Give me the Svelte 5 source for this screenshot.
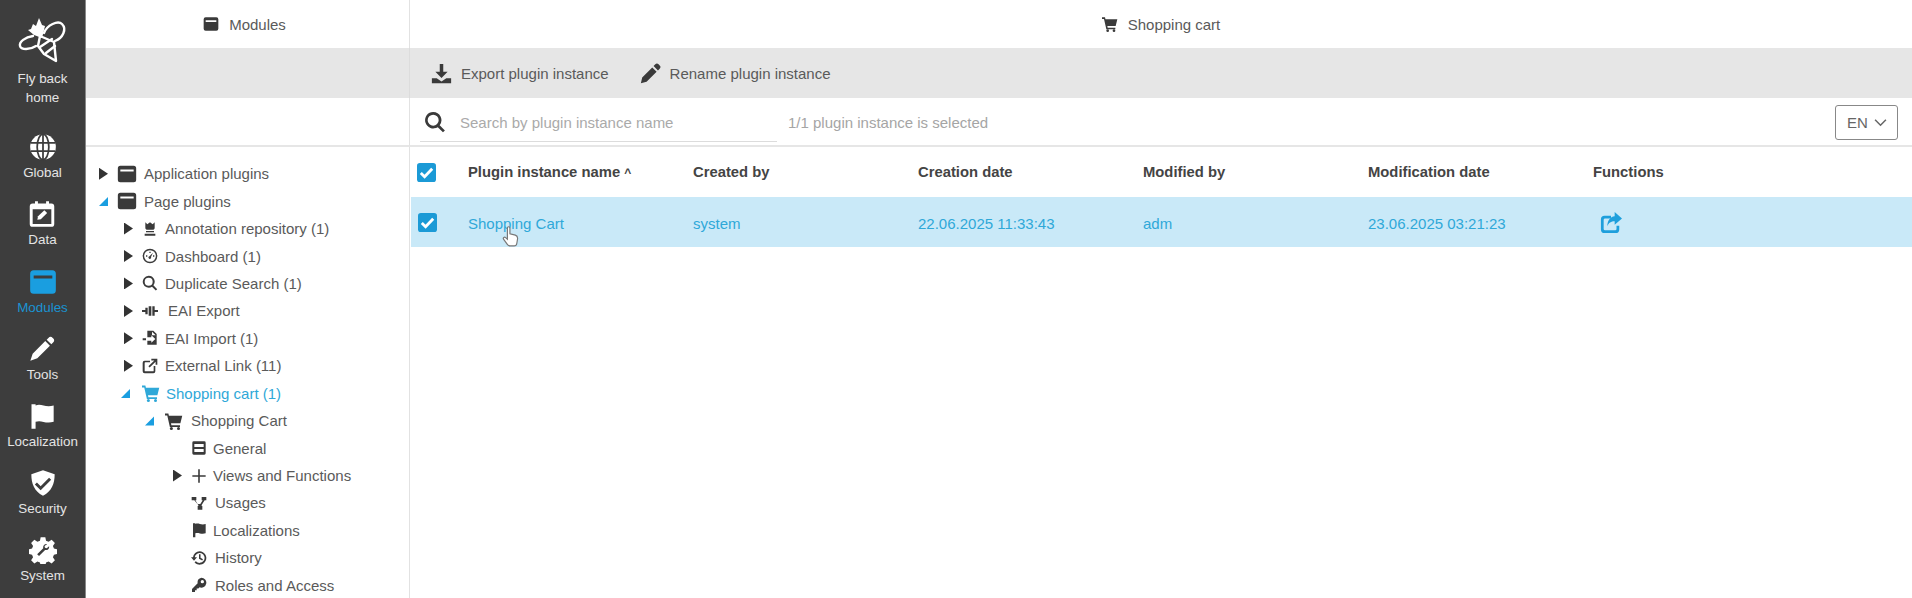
<script lang="ts">
	const nav = [
		{ id: 'global', label: 'Global' },
		{ id: 'data', label: 'Data' },
		{ id: 'modules', label: 'Modules', active: true },
		{ id: 'tools', label: 'Tools' },
		{ id: 'flag', label: 'Localization' },
		{ id: 'security', label: 'Security' },
		{ id: 'system', label: 'System' }
	];

	// level sets the indent, caret is closed / open / none
	const tree = [
		{ level: 0, caret: 'closed', icon: 'modules', label: 'Application plugins' },
		{ level: 0, caret: 'open', icon: 'modules', label: 'Page plugins' },
		{ level: 1, caret: 'closed', icon: 'crown', label: 'Annotation repository (1)' },
		{ level: 1, caret: 'closed', icon: 'gauge', label: 'Dashboard (1)' },
		{ level: 1, caret: 'closed', icon: 'search', label: 'Duplicate Search (1)' },
		{ level: 1, caret: 'closed', icon: 'export', label: 'EAI Export', wide: true },
		{ level: 1, caret: 'closed', icon: 'import', label: 'EAI Import (1)' },
		{ level: 1, caret: 'closed', icon: 'link', label: 'External Link (11)' },
		{ level: 1, caret: 'open', icon: 'cart', label: 'Shopping cart (1)', active: true },
		{ level: 2, caret: 'open', icon: 'cart', label: 'Shopping Cart' },
		{ level: 3, caret: 'none', icon: 'general', label: 'General' },
		{ level: 3, caret: 'closed', icon: 'plus', label: 'Views and Functions' },
		{ level: 3, caret: 'none', icon: 'usages', label: 'Usages', wide: true },
		{ level: 3, caret: 'none', icon: 'flag', label: 'Localizations' },
		{ level: 3, caret: 'none', icon: 'history', label: 'History', wide: true },
		{ level: 3, caret: 'none', icon: 'key', label: 'Roles and Access', wide: true }
	];

	const columns = ['Created by', 'Creation date', 'Modified by', 'Modification date'];
	const row = ['system', '22.06.2025 11:33:43', 'adm', '23.06.2025 03:21:23'];
</script>

{#snippet icon(name: string)}
	<svg class="icon" viewBox="0 0 24 24" aria-hidden="true">
		{#if name === 'modules'}
			<path fill-rule="evenodd" d="M4 2h16a3 3 0 0 1 3 3v14a3 3 0 0 1-3 3H4a3 3 0 0 1-3-3V5a3 3 0 0 1 3-3zM4 6.500v2.500h16V6.500z" />
		{:else if name === 'global'}
			<circle cx="12" cy="12" r="11" />
			<g fill="none" stroke="#3d3d3d" stroke-width="1.500">
				<ellipse cx="12" cy="12" rx="5" ry="11" />
				<path d="M12 1v22M1.500 8.500h21M1.500 15.500h21" />
			</g>
		{:else if name === 'data'}
			<path fill-rule="evenodd" d="M6 1h2.500v2h7V1H18v2h2a2.500 2.500 0 0 1 2.500 2.500v15A2.500 2.500 0 0 1 20 23H4a2.500 2.500 0 0 1-2.500-2.500v-15A2.500 2.500 0 0 1 4 3h2zM4 8v12.500h16V8z" />
			<path d="M8 17l.6-3 5.400-5.200 2.400 2.400-5.400 5.200z" />
		{:else if name === 'tools'}
			<path d="M17.500 2.500a2.600 2.600 0 0 1 3.700 0l.3.300a2.600 2.600 0 0 1 0 3.700L20 8l-4-4zM14.800 5.200l4 4L8 20l-6 2 2-6z" />
		{:else if name === 'flag'}
			<path d="M3 2h3.500v1c5-2 8 2 15.500 0v14c-7.500 2-10.500-2-15.500 0v6H3z" />
		{:else if name === 'security'}
			<path fill-rule="evenodd" d="M12 1l10 3.500c0 8-2.500 14.500-10 18.500C4.500 19 2 12.500 2 4.500zM6.800 11.500l-1.800 1.800 5 5 9-9-1.800-1.800-7.200 7.200z" />
		{:else if name === 'system'}
			<path fill-rule="evenodd" d="M10 1h4l.6 3 2.200.9 2.600-1.700 2.800 2.800-1.700 2.600.9 2.200 3 .6v4l-3 .6-.9 2.200 1.700 2.600-2.800 2.800-2.600-1.700-2.200.9-.6 3h-4l-.6-3-2.200-.9-2.600 1.700-2.800-2.800 1.700-2.600-.9-2.200-3-.6v-4l3-.6.9-2.200-1.700-2.600 2.800-2.800 2.600 1.700 2.200-.9zM15.500 7c-2-.5-3.800 1.200-3.300 3.400L7 15.600 8.600 17.200l5.200-5.200c2.200.5 3.900-1.300 3.400-3.300l-2 1.800-1.500-.4-.4-1.500z" />
		{:else if name === 'crown'}
			<path d="M5 2l3 3 4-3 4 3 3-3v8c0 2-1.500 3-3 3H8c-1.500 0-3-1-3-3zM6 15h12v2H6zM4 19h16v3H4z" />
		{:else if name === 'gauge'}
			<path fill-rule="evenodd" d="M12 1a11 11 0 1 1 0 22 11 11 0 0 1 0-22zm0 2.200a8.800 8.800 0 1 0 0 17.600 8.800 8.800 0 0 0 0-17.600z" />
			<path d="M16.500 7l-3 6.500a2 2 0 1 1-2.300-1.200zM6 11h2v2H6zM11 5.500h2v2h-2zM16.500 11h2v2h-2z" />
		{:else if name === 'search'}
			<path fill-rule="evenodd" d="M10 1a9 9 0 0 1 7.100 14.500l5.700 5.700-2.100 2.100-5.700-5.700A9 9 0 1 1 10 1zm0 3a6 6 0 1 0 0 12 6 6 0 0 0 0-12z" />
		{:else if name === 'export'}
			<path d="M0 10.500h5V7h3.500v10H5v-3.500H0zM10 5h4v14h-4zM15.500 5H19v5.500h5v3h-5V19h-3.500z" />
		{:else if name === 'import'}
			<path fill-rule="evenodd" d="M8 1h9l5 5v16H8v-6h6v3l6-5.500-6-5.500v3H8zM15 2.500V8h5.500zM1 12.500h5v3H1z" />
		{:else if name === 'link'}
			<path d="M4 4h8v2.500H5a1 1 0 0 0-1 1V19a1 1 0 0 0 1 1h11.500a1 1 0 0 0 1-1v-7H20v8a3 3 0 0 1-3 3H4a3 3 0 0 1-3-3V7a3 3 0 0 1 3-3zM14 1h9v9h-2.600V5.500L11.500 14.400 9.600 12.500 18.500 3.600H14z" />
		{:else if name === 'cart'}
			<path d="M0 2h4.500l.7 3H23l-2.500 10H8l.5 2.500H20V20H6.500L3 4.500H0z" />
			<circle cx="8.500" cy="22" r="2" />
			<circle cx="18" cy="22" r="2" />
		{:else if name === 'general'}
			<path fill-rule="evenodd" d="M4 2h16a2 2 0 0 1 2 2v16a2 2 0 0 1-2 2H4a2 2 0 0 1-2-2V4a2 2 0 0 1 2-2zM5 6v4.500h14V6zM5 13.500V18h14v-4.500z" />
		{:else if name === 'plus'}
			<path d="M10.800 2h2.400v8.800H22v2.400h-8.800V22h-2.400v-8.800H2v-2.400h8.800z" />
		{:else if name === 'usages'}
			<path d="M1 3h7v5H6.500L10 13.500h4L17.500 8H16V3h7v5h-2.500L16 15v1.500h1V22h-7v-5.500h1V15L5 8H1z" />
		{:else if name === 'history'}
			<path d="M13 2a10 10 0 1 1-7.700 16.400l2-1.700A7.400 7.400 0 1 0 5.600 11H9l-4.500 5L0 11h3A10 10 0 0 1 13 2zM12 6.500h2.300v5.200l3.700 2.200-1.200 2-4.800-2.900z" />
		{:else if name === 'key'}
			<path fill-rule="evenodd" d="M15.500 1a7.500 7.500 0 1 1-2.700 14.500L11 17.300H8.500v2.500H6V22.500H1.500V18l8.500-8.500A7.500 7.500 0 0 1 15.500 1zm1.500 3.500a2.500 2.500 0 1 0 0 5 2.500 2.500 0 0 0 0-5z" />
		{/if}
	</svg>
{/snippet}

{#snippet check()}
	<svg class="check" viewBox="0 0 20 20" aria-hidden="true">
		<rect x="0" y="0" width="20" height="20" rx="3" fill="#1b9ad6" />
		<path d="M4 10.500l4 4 8-8.500" fill="none" stroke="#fff" stroke-width="3" />
	</svg>
{/snippet}

<div class="app">
	<nav class="rail">
		<a class="home" href="#home">
			<svg class="bee" viewBox="17 16 52 48" aria-hidden="true">
				<path d="M28 30l3-1 2-5 3 2 3-8 3 7 3 1-3 12-8-3z" fill="#fff" />
				<g fill="none" stroke="#fff" stroke-width="2.400" stroke-linejoin="round" stroke-linecap="round">
					<path d="M44 33c3-8 14-13 18-9 5 5 1 14-7 17" />
					<path d="M33 36c-8 1-14 6-13 10 1 4 10 4 16 0" />
					<path d="M40 36l14 6 2 19-12-7-6-8z" />
					<path d="M40 47l12-8M46 53l9-7" />
				</g>
			</svg>
			<span>Fly back<br />home</span>
		</a>
		{#each nav as item}
			<a class="item" class:active={item.active} href="#{item.id}">
				{@render icon(item.id)}
				<span>{item.label}</span>
			</a>
		{/each}
	</nav>

	<div class="shell">
		<div class="title title-left">
			{@render icon('modules')}
			<span>Modules</span>
		</div>
		<div class="title">
			{@render icon('cart')}
			<span>Shopping cart</span>
		</div>

		<div class="band band-left"></div>
		<div class="band toolbar">
			<button type="button">
				<svg class="icon tool-icon" viewBox="0 0 24 24" aria-hidden="true">
					<path d="M10 1h4v9h5l-7 7-7-7h5zM1 17.500h5.500L12 21l5.500-3.500H23V23H1z" />
				</svg>
				Export plugin instance
			</button>
			<button type="button">
				<svg class="icon tool-icon" viewBox="0 0 24 24" aria-hidden="true">
					<path d="M17.500 1.500a2.600 2.600 0 0 1 3.700 0l1.300 1.300a2.600 2.600 0 0 1 0 3.700L20.500 8.500l-5-5zM14 5l5 5L7.500 21.500 1 23l1.500-6.500z" />
				</svg>
				Rename plugin instance
			</button>
		</div>

		<div class="side-top"></div>
		<div class="filter">
			<div class="search">
				{@render icon('search')}
				<span>Search by plugin instance name</span>
			</div>
			<span class="count">1/1 plugin instance is selected</span>
			<button class="lang" type="button">
				EN
				<svg viewBox="0 0 12 8" aria-hidden="true">
					<path d="M1 1.500l5 5 5-5" fill="none" stroke="#666" stroke-width="1.400" />
				</svg>
			</button>
		</div>

		<ul class="tree">
			{#each tree as node}
				<li class="node level-{node.level}" class:active={node.active} class:wide={node.wide}>
					<span class="caret {node.caret}"></span>
					{@render icon(node.icon)}
					<span>{node.label}</span>
				</li>
			{/each}
		</ul>

		<div class="table">
			<div class="head">
				<span class="box">{@render check()}</span>
				<span class="cell">Plugin instance name <small>^</small></span>
				{#each columns as col}
					<span class="cell">{col}</span>
				{/each}
				<span class="cell">Functions</span>
			</div>
			<div class="rowline">
				<span class="box">{@render check()}</span>
				<span class="cell name">
					Shopping Cart
					<svg class="hand" viewBox="0 0 20 24" aria-hidden="true">
						<path d="M6 2.500c0-1.800 2.800-1.800 2.800 0V9l6 1.500c2 .6 2.700 2 2.500 4l-.8 5c-.3 1.800-1.500 3-3 3H9c-1.500 0-2.500-.8-3.300-2L1.700 15c-1-1.600 1-3 2.300-1.800L6 15z" fill="#fff" stroke="#777" stroke-width="1.300" />
					</svg>
				</span>
				{#each row as value}
					<span class="cell">{value}</span>
				{/each}
				<span class="cell fn">
					<svg viewBox="0 0 24 24" aria-hidden="true">
						<path d="M5 4h7v3H5.500A1.500 1.500 0 0 0 4 8.500v10A1.500 1.500 0 0 0 5.500 20h11a1.500 1.500 0 0 0 1.500-1.500V15h3v4a4 4 0 0 1-4 4H5a4 4 0 0 1-4-4V8a4 4 0 0 1 4-4z" fill="#1e9fdc" />
						<path d="M16 0l8 7-8 7V10c-4 0-6.500 1.500-8 5.500C8 9.500 11 5 16 4.500z" fill="#1e9fdc" />
					</svg>
				</span>
			</div>
		</div>
	</div>
</div>

<style>
	:global(body) {
		background: #fff;
		overflow: hidden;
	}

	.app {
		display: flex;
		height: 598px;
		overflow: hidden;
		font-family: 'Liberation Sans', Arial, sans-serif;
		font-size: 15px;
		color: #5a5a5a;
	}

	.icon {
		flex: none;
		width: 16px;
		height: 16px;
		fill: currentColor;
	}

	.rail {
		flex: none;
		width: 86px;
		display: flex;
		flex-direction: column;
		align-items: center;
		background: #3d3d3d;
		color: #e4e4e4;
		font-size: 13.400px;
		text-align: center;
		border-right: 1px solid #888;
		box-sizing: border-box;
	}

	.rail a {
		display: flex;
		flex-direction: column;
		align-items: center;
		color: inherit;
		text-decoration: none;
	}

	.home {
		padding-top: 16px;
		height: 129px;
		box-sizing: border-box;
		line-height: 18.500px;
		gap: 6px;
	}

	.bee {
		flex: none;
		width: 52px;
		height: 48px;
	}

	.item {
		height: 67.500px;
		box-sizing: border-box;
		padding-top: 5px;
		gap: 4px;
		line-height: 15px;
		white-space: nowrap;
	}

	.item .icon {
		width: 28px;
		height: 28px;
		fill: #fff;
	}

	.item.active {
		color: #1a93d2;
	}

	.item.active .icon {
		fill: #1a9ee0;
	}

	.shell {
		flex: 1;
		min-width: 0;
		display: grid;
		grid-template-columns: 324px 1fr;
		grid-template-rows: 48px 50px 49px 1fr;
	}

	.title {
		display: flex;
		align-items: center;
		justify-content: center;
		gap: 10px;
	}

	.title .icon {
		color: #3a3a3a;
	}

	.title-left {
		padding-right: 6px;
		border-right: 1px solid #e2e2e2;
	}

	.band {
		background: #e6e6e6;
	}

	.band-left {
		border-right: 1px solid #dcdcdc;
	}

	.toolbar {
		display: flex;
		align-items: center;
		gap: 31px;
		padding-left: 21px;
	}

	.toolbar button {
		display: flex;
		align-items: center;
		gap: 9px;
		padding: 0;
		border: 0;
		background: none;
		font: inherit;
		color: #5a5a5a;
	}

	.tool-icon {
		width: 21px;
		height: 21px;
		color: #3a3a3a;
	}

	.side-top {
		border-right: 1px solid #e2e2e2;
		border-bottom: 2px solid #e6e6e6;
	}

	.filter {
		display: flex;
		align-items: center;
		padding: 2px 0 0 10px;
		border-bottom: 2px solid #e6e6e6;
	}

	.search {
		display: flex;
		align-items: center;
		gap: 14px;
		width: 357px;
		height: 38px;
		padding-left: 4px;
		box-sizing: border-box;
		border-bottom: 1px solid #dcdcdc;
		color: #aaa;
	}

	.search .icon {
		width: 22px;
		height: 22px;
		color: #3a3a3a;
	}

	.count {
		margin-left: 11px;
		color: #a5a5a5;
	}

	.lang {
		display: flex;
		align-items: center;
		gap: 6px;
		margin: 0 14px 0 auto;
		width: 63px;
		height: 35px;
		padding: 0 0 0 11px;
		border: 1px solid #888;
		border-radius: 3px;
		background: #fff;
		font: inherit;
		color: #666;
	}

	.lang svg {
		width: 13px;
		height: 9px;
	}

	.tree {
		margin: 0;
		padding: 13px 0 0;
		list-style: none;
		border-right: 1px solid #e2e2e2;
		overflow: hidden;
	}

	.node {
		display: flex;
		align-items: center;
		height: 27.450px;
		white-space: nowrap;
	}

	.node .icon {
		margin-right: 7px;
		color: #3a3a3a;
	}

	.node.wide .icon {
		margin-right: 10px;
	}

	.level-0 {
		padding-left: 13px;
	}

	.level-0 .icon {
		width: 20px;
		height: 20px;
	}

	.level-1 {
		padding-left: 38px;
	}

	.level-2 {
		padding-left: 59px;
	}

	.level-2 .caret {
		margin-right: 11px;
	}

	.level-2 .icon,
	.node.active .icon {
		width: 18px;
		height: 18px;
	}

	.level-2 .icon {
		margin-right: 8px;
	}

	.level-3 {
		padding-left: 87px;
	}

	.level-3 .icon {
		margin-right: 6px;
	}

	.level-3.wide .icon {
		margin-right: 8px;
	}

	.node.active {
		padding-left: 35px;
	}

	.node.active .caret {
		margin-right: 12px;
	}

	.node.active .icon {
		margin-right: 6px;
	}

	.node.active,
	.node.active .icon {
		color: #2fa8d8;
	}

	.caret {
		flex: none;
		width: 9px;
		height: 12px;
		margin-right: 9px;
	}

	.caret.closed {
		clip-path: polygon(0 0, 100% 50%, 0 100%);
		background: #333;
	}

	.caret.open {
		clip-path: polygon(100% 15%, 100% 90%, 0 90%);
		background: #1a9ee0;
	}

	.table {
		min-width: 0;
	}

	.head,
	.rowline {
		display: grid;
		grid-template-columns: 58px repeat(5, 225px) 1fr;
		align-items: center;
	}

	.head {
		height: 50px;
		font-weight: 700;
		color: #444;
		font-size: 14.800px;
	}

	.head small {
		font-size: 12px;
	}

	.box {
		display: flex;
		padding-left: 7px;
	}

	.check {
		width: 19px;
		height: 19px;
	}

	.rowline {
		height: 50px;
		margin-left: 1px;
		grid-template-columns: 57px repeat(5, 225px) 1fr;
		background: #c9e9f8;
		color: #2fa8d8;
	}

	.rowline .cell {
		padding-top: 2px;
	}

	.name {
		position: relative;
	}

	.hand {
		position: absolute;
		left: 34px;
		top: 12px;
		width: 18px;
		height: 23px;
	}

	.fn svg {
		display: block;
		width: 22px;
		height: 22px;
		margin-left: 7px;
	}
</style>
